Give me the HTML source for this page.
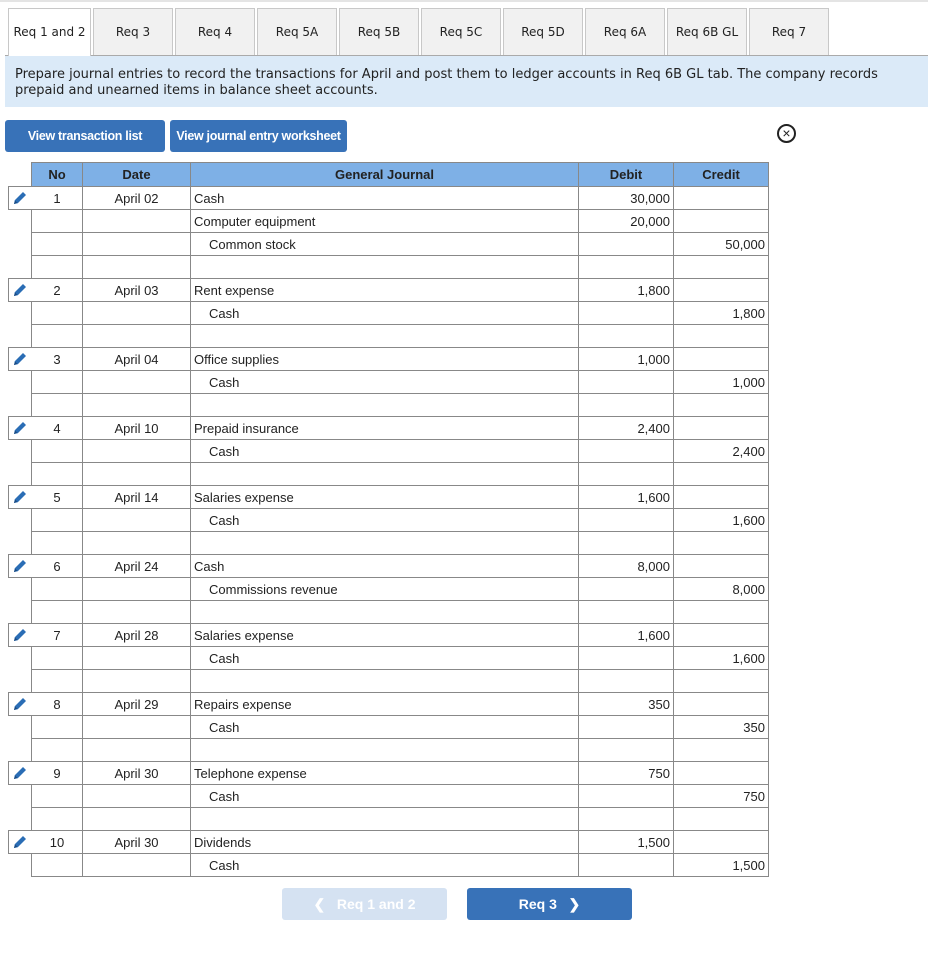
<!DOCTYPE html>
<html><head><meta charset="utf-8"><style>
*{box-sizing:border-box;margin:0;padding:0}
body{width:942px;height:956px;background:#fff;position:relative;font-family:"Liberation Sans",Arial,sans-serif;overflow:hidden}
.top{position:absolute;left:0;top:0;width:928px;height:2px;background:#e4e4e4}
.tab{position:absolute;top:8px;height:48px;width:80px;background:#f1f1f1;border:1px solid #c8c8c8;border-bottom:none;font-family:"DejaVu Sans",Verdana,sans-serif;font-size:12px;color:#222;text-align:center;line-height:47px}
.tab.act{background:#fff;height:48px;z-index:2}
.tabline{position:absolute;left:5px;top:55px;width:923px;height:1px;background:#aaa}
.info{position:absolute;left:5px;top:56px;width:923px;height:51px;background:#dbeaf8;font-family:"DejaVu Sans",Verdana,sans-serif;font-size:13px;color:#222;padding:11px 10px 0;line-height:16px;white-space:nowrap}
.btn{position:absolute;top:120px;height:32px;background:#3872b8;color:#fff;font-weight:bold;font-size:12.5px;text-align:center;line-height:32px;border-radius:3px;letter-spacing:-0.3px}
.close{position:absolute;left:777px;top:124px;width:19px;height:19px;border:2px solid #222;border-radius:50%;text-align:center;line-height:14px;font-size:14px;color:#222}
table{position:absolute;left:31px;top:162px;border-collapse:collapse;font-size:13px;color:#222}
td,th{border:1px solid #888;height:23px;padding:0 3px}
th{background:#7eb0e6;height:24px;font-weight:bold;color:#222}
td.c{text-align:center}
td.r{text-align:right}
td.i{padding-left:18px}
.ed{position:absolute;left:8px;width:24px;height:24px;border:1px solid #888;border-right:none;background:#fff}
.nb{position:absolute;top:888px;width:165px;height:32px;border-radius:3px;color:#fff;font-weight:bold;font-size:14px;text-align:center;line-height:32px}
</style></head><body>
<div class="top"></div>
<div class="tab act" style="left:8px;width:83px">Req 1 and 2</div>
<div class="tab" style="left:93px">Req 3</div>
<div class="tab" style="left:175px">Req 4</div>
<div class="tab" style="left:257px">Req 5A</div>
<div class="tab" style="left:339px">Req 5B</div>
<div class="tab" style="left:421px">Req 5C</div>
<div class="tab" style="left:503px">Req 5D</div>
<div class="tab" style="left:585px">Req 6A</div>
<div class="tab" style="left:667px">Req 6B GL</div>
<div class="tab" style="left:749px">Req 7</div>
<div class="tabline"></div>
<div class="info">Prepare journal entries to record the transactions for April and post them to ledger accounts in Req 6B GL tab. The company records<br>prepaid and unearned items in balance sheet accounts.</div>
<div class="btn" style="left:5px;width:160px">View transaction list</div>
<div class="btn" style="left:170px;width:177px">View journal entry worksheet</div>
<div class="close">×</div>
<table>
<colgroup><col style="width:51px"><col style="width:108px"><col style="width:388px"><col style="width:95px"><col style="width:95px"></colgroup>
<tr><th>No</th><th>Date</th><th>General Journal</th><th>Debit</th><th>Credit</th></tr>
<tr><td class="c">1</td><td class="c">April 02</td><td>Cash</td><td class="r">30,000</td><td></td></tr>
<tr><td></td><td></td><td>Computer equipment</td><td class="r">20,000</td><td></td></tr>
<tr><td></td><td></td><td class="i">Common stock</td><td></td><td class="r">50,000</td></tr>
<tr><td></td><td></td><td></td><td></td><td></td></tr>
<tr><td class="c">2</td><td class="c">April 03</td><td>Rent expense</td><td class="r">1,800</td><td></td></tr>
<tr><td></td><td></td><td class="i">Cash</td><td></td><td class="r">1,800</td></tr>
<tr><td></td><td></td><td></td><td></td><td></td></tr>
<tr><td class="c">3</td><td class="c">April 04</td><td>Office supplies</td><td class="r">1,000</td><td></td></tr>
<tr><td></td><td></td><td class="i">Cash</td><td></td><td class="r">1,000</td></tr>
<tr><td></td><td></td><td></td><td></td><td></td></tr>
<tr><td class="c">4</td><td class="c">April 10</td><td>Prepaid insurance</td><td class="r">2,400</td><td></td></tr>
<tr><td></td><td></td><td class="i">Cash</td><td></td><td class="r">2,400</td></tr>
<tr><td></td><td></td><td></td><td></td><td></td></tr>
<tr><td class="c">5</td><td class="c">April 14</td><td>Salaries expense</td><td class="r">1,600</td><td></td></tr>
<tr><td></td><td></td><td class="i">Cash</td><td></td><td class="r">1,600</td></tr>
<tr><td></td><td></td><td></td><td></td><td></td></tr>
<tr><td class="c">6</td><td class="c">April 24</td><td>Cash</td><td class="r">8,000</td><td></td></tr>
<tr><td></td><td></td><td class="i">Commissions revenue</td><td></td><td class="r">8,000</td></tr>
<tr><td></td><td></td><td></td><td></td><td></td></tr>
<tr><td class="c">7</td><td class="c">April 28</td><td>Salaries expense</td><td class="r">1,600</td><td></td></tr>
<tr><td></td><td></td><td class="i">Cash</td><td></td><td class="r">1,600</td></tr>
<tr><td></td><td></td><td></td><td></td><td></td></tr>
<tr><td class="c">8</td><td class="c">April 29</td><td>Repairs expense</td><td class="r">350</td><td></td></tr>
<tr><td></td><td></td><td class="i">Cash</td><td></td><td class="r">350</td></tr>
<tr><td></td><td></td><td></td><td></td><td></td></tr>
<tr><td class="c">9</td><td class="c">April 30</td><td>Telephone expense</td><td class="r">750</td><td></td></tr>
<tr><td></td><td></td><td class="i">Cash</td><td></td><td class="r">750</td></tr>
<tr><td></td><td></td><td></td><td></td><td></td></tr>
<tr><td class="c">10</td><td class="c">April 30</td><td>Dividends</td><td class="r">1,500</td><td></td></tr>
<tr><td></td><td></td><td class="i">Cash</td><td></td><td class="r">1,500</td></tr>
</table>
<svg width="0" height="0" style="position:absolute"><defs><symbol id="p" viewBox="0 0 24 24"><path d="M4 20l1-5L16 4l4 4L9 19z" fill="#2a6db5"/><path d="M4 20l1.5-4.5 3 3z" fill="#1a4a80"/></symbol></defs></svg>
<div class="ed" style="top:186px"><svg width="18" height="18" style="margin:2px"><use href="#p"/></svg></div>
<div class="ed" style="top:278px"><svg width="18" height="18" style="margin:2px"><use href="#p"/></svg></div>
<div class="ed" style="top:347px"><svg width="18" height="18" style="margin:2px"><use href="#p"/></svg></div>
<div class="ed" style="top:416px"><svg width="18" height="18" style="margin:2px"><use href="#p"/></svg></div>
<div class="ed" style="top:485px"><svg width="18" height="18" style="margin:2px"><use href="#p"/></svg></div>
<div class="ed" style="top:554px"><svg width="18" height="18" style="margin:2px"><use href="#p"/></svg></div>
<div class="ed" style="top:623px"><svg width="18" height="18" style="margin:2px"><use href="#p"/></svg></div>
<div class="ed" style="top:692px"><svg width="18" height="18" style="margin:2px"><use href="#p"/></svg></div>
<div class="ed" style="top:761px"><svg width="18" height="18" style="margin:2px"><use href="#p"/></svg></div>
<div class="ed" style="top:830px"><svg width="18" height="18" style="margin:2px"><use href="#p"/></svg></div>
<div class="nb" style="left:282px;background:#d5e2f2">&#10094;&nbsp;&nbsp; Req 1 and 2</div>
<div class="nb" style="left:467px;background:#3872b8">Req 3 &nbsp;&nbsp;&#10095;</div>
</body></html>
